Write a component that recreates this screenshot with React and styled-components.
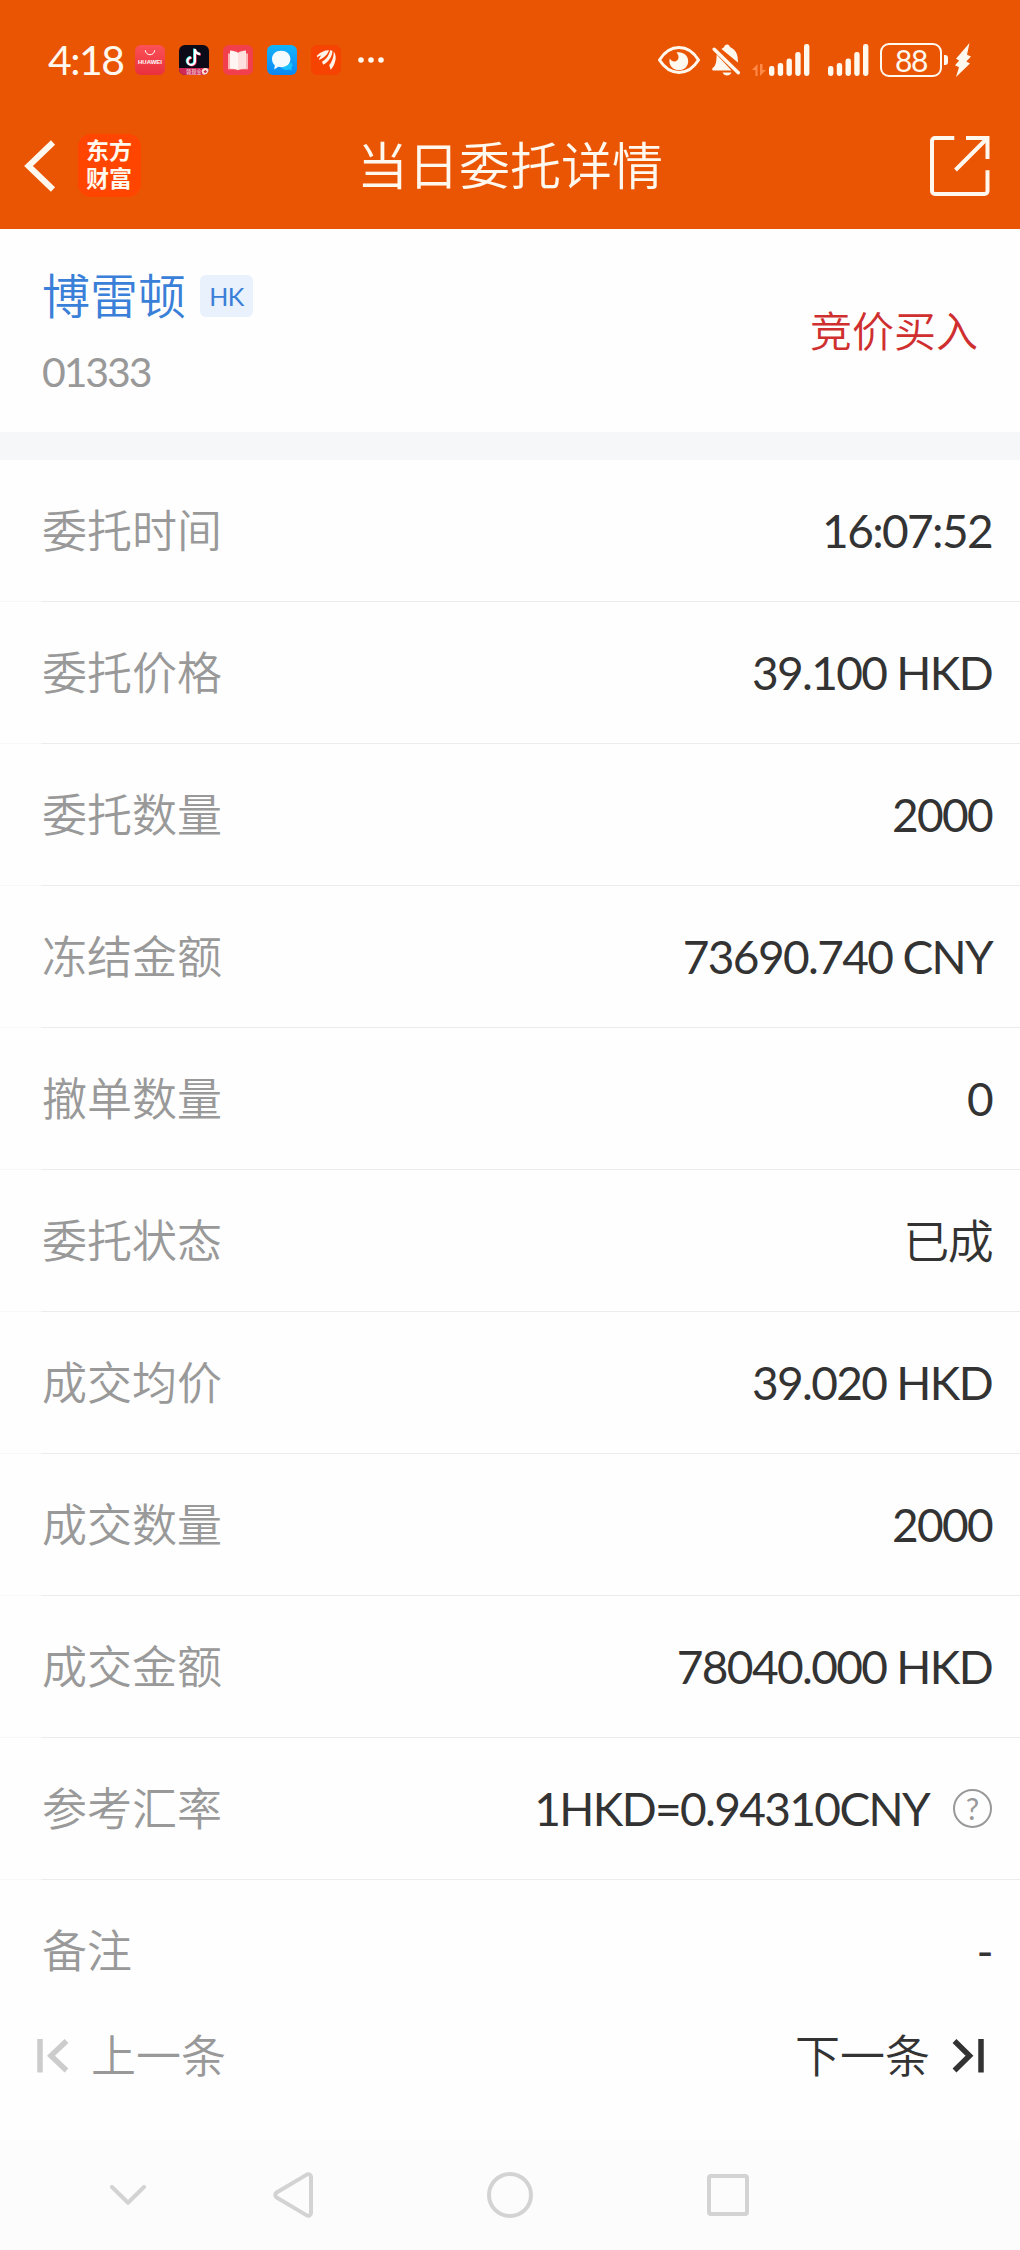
import React from 'react';
import styled, { createGlobalStyle } from 'styled-components';

const DETAILS = [
  { label: '委托时间', value: '16:07:52' },
  { label: '委托价格', value: '39.100 HKD' },
  { label: '委托数量', value: '2000' },
  { label: '冻结金额', value: '73690.740 CNY' },
  { label: '撤单数量', value: '0' },
  { label: '委托状态', value: '已成', isText: true },
  { label: '成交均价', value: '39.020 HKD' },
  { label: '成交数量', value: '2000' },
  { label: '成交金额', value: '78040.000 HKD' },
  { label: '参考汇率', value: '1HKD=0.94310CNY', help: true },
  { label: '备注', value: '-' },
];

const SIGNAL_BARS = [10, 13, 17.5, 24, 32];

const Signal = () => (
  <svg width="41" height="32" viewBox="0 0 41 32" fill="#fff8ee">
    {SIGNAL_BARS.map((h, i) => (
      <rect key={h} x={i * 8.75} y={32 - h} width="5.4" height={h} rx="2.4" />
    ))}
  </svg>
);

const StatusBar = () => (
  <StatusWrapper>
    <StatusLeft>
      <Time>4:18</Time>
      <AppIcons>
        <svg width="30" height="30" viewBox="0 0 30 30">
          <defs>
            <linearGradient id="market" x1="0" y1="0" x2="0" y2="1">
              <stop offset="0" stopColor="#fb5157" />
              <stop offset="1" stopColor="#e9303e" />
            </linearGradient>
          </defs>
          <rect width="30" height="30" rx="6" fill="url(#market)" />
          <path d="M10.3 5.2c.3 6 9 6 9.4 0" fill="none" stroke="#fff" strokeWidth="1" />
          <TinyText x="15" y="19.2" textAnchor="middle" textLength="24" lengthAdjust="spacingAndGlyphs">
            HUAWEI
          </TinyText>
        </svg>
        <svg width="30" height="30" viewBox="0 0 30 30">
          <defs>
            <clipPath id="tile">
              <rect width="30" height="30" rx="6" />
            </clipPath>
          </defs>
          <g clipPath="url(#tile)">
            <rect width="30" height="30" fill="#0d0b18" />
            <g fill="none" strokeWidth="2.2">
              <path d="M15.2 3.6v12.2a3.7 3.7 0 1 1-3.7-3.7M15.2 4c.5 3 2.5 4.300 5.300 4.600" stroke="#25e6e4" />
              <path d="M16.600 4.500v12.200a3.700 3.700 0 1 1-3.700-3.700M16.600 5c.5 3 2.500 4.300 5.300 4.600" stroke="#f5335f" />
              <path d="M15.900 4v12.200a3.700 3.700 0 1 1-3.700-3.700M15.900 4.500c.5 3 2.500 4.300 5.300 4.600" stroke="#fff" />
            </g>
            <path d="M0 23h30v7H0z" fill="#cf2a58" />
            <circle cx="26.300" cy="26.600" r="3.500" fill="#ffe0cf" />
            <path d="M24.800 26.600h3M26.300 25.100v3" stroke="#cf2a58" strokeWidth="1.100" />
            <SubText x="7" y="28.600">领现金</SubText>
          </g>
        </svg>
        <svg width="30" height="30" viewBox="0 0 30 30">
          <rect width="30" height="30" rx="6" fill="#f23f4d" />
          <path d="M5 8.5h20v15.8H5z" fill="#fbb3b4" />
          <path d="M7 5.5c3 .2 6 .8 8 2.2v17.6c-2-1.3-5-1.7-8-1.8z" fill="#fff5f2" />
          <path d="M23 5.5c-3 .2-6 .8-8 2.2v17.6c2-1.3 5-1.7 8-1.8z" fill="#ffe0de" />
        </svg>
        <svg width="30" height="30" viewBox="0 0 30 30">
          <defs>
            <linearGradient id="chat" x1="0" y1="0" x2="0" y2="1">
              <stop offset="0" stopColor="#12b4fb" />
              <stop offset="1" stopColor="#0a87f4" />
            </linearGradient>
          </defs>
          <rect width="30" height="30" rx="6" fill="url(#chat)" />
          <path d="M24.5 17.5c1.5 2.5.8 4.5-.2 5.5l.6 2.4-3-.8c-3 .8-6 .2-7.5-1.8z" fill="#17c2ff" />
          <path
            d="M14.2 5.8c5.3 0 9.2 3.4 9.2 8.2s-3.900 8.200-9.200 8.200c-1 0-2-.1-2.900-.4L7.200 24.500l.6-4.300C6 18.600 5 16.500 5 14c0-4.800 3.900-8.200 9.200-8.200z"
            fill="#f4fbff"
          />
        </svg>
        <svg width="30" height="30" viewBox="0 0 30 30">
          <rect width="30" height="30" rx="6" fill="#f64302" />
          <g fill="#fff3ea">
            <path d="M6 10.5C9.5 7 14 5 18 5.2c-1.2 4.3-5.2 7.8-10.2 9.8.4-1.9 1.3-3.3 2.5-4.5-1.6.2-3.2.9-4.3 2z" />
            <path d="M19.2 5.3l2.3.5c-.2 5.5-3.300 10.800-9.300 14l-1.200-3c4.500-2.900 7.400-6.900 8.200-11.500z" />
            <path d="M22.800 6.400c2.200 3 2.400 7 1.200 10.600-1 3-2.200 5.600-4.300 7.800l-1.500-4.500c2.800-3.800 4.600-8.400 4.600-13.900z" />
          </g>
        </svg>
      </AppIcons>
      <svg width="26" height="6" viewBox="0 0 26 6" fill="#fff8ee">
        <circle cx="3" cy="3" r="2.8" />
        <circle cx="13" cy="3" r="2.8" />
        <circle cx="23" cy="3" r="2.8" />
      </svg>
    </StatusLeft>
    <StatusRight>
      <EyeIcon width="42" height="28" viewBox="0 0 42 28">
        <path
          d="M1.5 14C6.5 6 13 1.6 21 1.6S35.5 6 40.5 14C35.5 22 29 26.4 21 26.4S6.5 22 1.5 14z"
          fill="none"
          stroke="#fff8ee"
          strokeWidth="3"
          strokeLinejoin="round"
        />
        <path
          d="M18.5 6.5c6-1.3 11.7 2.5 11.7 8.7 0 5-4 9-9.2 9-5.4 0-9.6-4-9.6-9.2 0-1 .2-1.8.5-2.6 1.2 2.4 3.6 3.7 6 2.8 3.2-1.2 3.6-5.6.6-8.7z"
          fill="#fff8ee"
        />
      </EyeIcon>
      <BellIcon width="28" height="32" viewBox="0 0 28 32">
        <g fill="#fff8ee">
          <path d="M9.500 5C10.800 4 12 3.500 12.300 2.500c.8-2.700 4.500-2.700 5.300-.2.300 1 1.300 1.200 2.500 2C24.300 7.100 26.100 11.100 25.900 18.500z" />
          <path d="M4.600 10.500 19.500 26.500H1.200c-1.600-.6-1.300-2 0-3 2.500-2.200 3.400-5 3.400-13z" />
          <path d="M10.500 28.500h9c-1.500 4-7.500 4-9 0z" />
        </g>
        <path d="M2.200 5.200 26.300 28.700" stroke="#fff8ee" strokeWidth="3.400" strokeLinecap="round" />
      </BellIcon>
      <DataIcon width="14" height="12" viewBox="0 0 14 12">
        <path d="M5.500 12V0L0 6h3.500v6zM8 0v12l6-6h-3.500V0z" fill="#ff8a4a" />
      </DataIcon>
      <Signal />
      <SecondSignal>
        <Signal />
      </SecondSignal>
      <Battery>88</Battery>
      <BatteryTip />
      <svg width="16" height="34" viewBox="0 0 16 34">
        <path d="M14.500 0 1 15.800l3.200 1.700L0 22.200l4 2L1 34 15 20.500l-3.700-2L16 13.500l-4-1.700z" fill="#fff8ee" />
      </svg>
    </StatusRight>
  </StatusWrapper>
);

const App = () => (
  <>
    <GlobalStyle />
    <Page>
      <Top>
        <StatusBar />
        <TitleBar>
          <TitleSide>
            <BackIcon width="32" height="52" viewBox="0 0 32 52">
              <path d="M29 2.500 4.500 26 29 49.500" fill="none" stroke="#fff8ee" strokeWidth="6" />
            </BackIcon>
            <Brand>东方财富</Brand>
          </TitleSide>
          <Title>当日委托详情</Title>
          <TitleSide $end>
            <svg width="60" height="60" viewBox="0 0 60 60" fill="none" stroke="#fff8ee" strokeWidth="4">
              <path d="M24.300 2H5a3 3 0 0 0-3 3v50a3 3 0 0 0 3 3h49.500a3 3 0 0 0 3-3V34.300" />
              <path d="M36 2h21.500v21M56.500 3 25.500 34" />
            </svg>
          </TitleSide>
        </TitleBar>
      </Top>

      <Stock>
        <StockInfo>
          <StockHead>
            <StockName>博雷顿</StockName>
            <Market>HK</Market>
          </StockHead>
          <StockCode>01333</StockCode>
        </StockInfo>
        <Side>竞价买入</Side>
      </Stock>

      <List>
        {DETAILS.map(({ label, value, isText, help }) => (
          <Row key={label}>
            <Label>{label}</Label>
            <Value $isText={isText}>{value}</Value>
            {help && <Help>?</Help>}
          </Row>
        ))}
      </List>

      <Pager>
        <PagerButton $disabled>
          <svg width="32" height="34" viewBox="0 0 32 34" fill="none" stroke="#ccc" strokeWidth="5.500">
            <path d="M3 0v33.500M29.500 2 14 16.800 29.500 31.500" />
          </svg>
          上一条
        </PagerButton>
        <PagerButton>
          下一条
          <svg width="32" height="34" viewBox="0 0 32 34" fill="none" stroke="#333" strokeWidth="5.500">
            <path d="M29 0v33.500M2.500 2 17.500 16.800 2.500 31.500" />
          </svg>
        </PagerButton>
      </Pager>

      <SystemNav>
        <svg width="36" height="20" viewBox="0 0 36 20">
          <path d="M2 2l16 15.700L34 2" />
        </svg>
        <svg width="40" height="46" viewBox="0 0 40 46">
          <path d="M33.800 2.600 3.600 20.500a3 3 0 0 0 0 5L33.800 43.400a2.800 2.800 0 0 0 4.200-2.400V5a2.800 2.800 0 0 0-4.200-2.400z" />
        </svg>
        <svg width="46" height="46" viewBox="0 0 46 46">
          <circle cx="23" cy="23" r="21" />
        </svg>
        <svg width="42" height="42" viewBox="0 0 42 42">
          <rect x="2" y="2" width="38" height="38" rx="2" />
        </svg>
      </SystemNav>
    </Page>
  </>
);

export default App;

const GlobalStyle = createGlobalStyle`
  * {
    box-sizing: border-box;
  }

  body {
    margin: 0;
    font-family: Lato, 'Noto Sans CJK SC', sans-serif;
    font-weight: 350;
  }

  svg {
    display: block;
    flex-shrink: 0;
  }
`;

const Page = styled.div`
  display: flex;
  flex-direction: column;
  width: 1020px;
  height: 2250px;
  background: #fefefe;
`;

const Top = styled.header`
  height: 229px;
  padding-top: 18px;
  background: #ea5504;
  color: #fff8ee;
`;

const StatusWrapper = styled.div`
  display: flex;
  justify-content: space-between;
  height: 84px;
  padding: 0 49px 0 48px;
`;

const StatusLeft = styled.div`
  display: flex;
  align-items: center;
`;

const Time = styled.span`
  width: 87px;
  font-size: 41px;
  font-weight: 400;
  line-height: 50px;
  letter-spacing: -1.5px;
`;

const AppIcons = styled.div`
  display: flex;
  gap: 14px;
  margin-right: 17px;
`;

const TinyText = styled.text`
  fill: #fff;
  font-family: 'Liberation Sans', sans-serif;
  font-size: 5.5px;
  font-weight: 700;
`;

const SubText = styled.text`
  fill: #fff;
  font-family: 'Noto Sans CJK SC', sans-serif;
  font-size: 5.2px;
`;

const StatusRight = styled.div`
  display: flex;
  align-items: center;
`;

const EyeIcon = styled.svg`
  margin-right: 12px;
`;

const BellIcon = styled.svg`
  margin-right: 12px;
`;

const DataIcon = styled.svg`
  margin: 19px 3px 0 0;
`;

const SecondSignal = styled.div`
  margin: 0 11px 0 18px;
`;

const Battery = styled.div`
  width: 62px;
  height: 34px;
  border: 2px solid #fff8ee;
  border-radius: 9px;
  font-size: 30px;
  font-weight: 400;
  line-height: 30px;
  letter-spacing: -1.5px;
  text-align: center;
`;

const BatteryTip = styled.div`
  width: 4px;
  height: 10px;
  margin: 0 7px 0 2px;
  border-radius: 0 3px 3px 0;
  background: #fff8ee;
`;

const TitleBar = styled.div`
  display: flex;
  align-items: center;
  justify-content: space-between;
  height: 127px;
  padding: 0 30px;
`;

const TitleSide = styled.div`
  display: flex;
  flex: 1;
  align-items: center;
  justify-content: ${({ $end }) => ($end ? 'flex-end' : 'flex-start')};
  gap: 22px;
`;

const BackIcon = styled.svg`
  margin-left: -6px;
`;

const Brand = styled.div`
  width: 63px;
  height: 63px;
  padding: 3px 8px;
  border-radius: 13px;
  background: #ff4500;
  font-size: 23px;
  font-weight: 700;
  line-height: 27.5px;
  word-break: break-all;
`;

const Title = styled.h1`
  margin: 0;
  font-size: 51px;
  font-weight: 350;
  line-height: 60px;
`;

const Stock = styled.section`
  display: flex;
  align-items: center;
  justify-content: space-between;
  height: 203px;
  padding: 0 42px;
`;

const StockInfo = styled.div`
  padding-top: 5px;
`;

const StockHead = styled.div`
  display: flex;
  align-items: center;
  gap: 14px;
`;

const StockName = styled.span`
  color: #3a7fd8;
  font-size: 48px;
  line-height: 60px;
`;

const Market = styled.span`
  width: 53px;
  height: 42px;
  border-radius: 6px;
  background: #e8f1fc;
  color: #3a7fd8;
  font-size: 25px;
  font-weight: 400;
  line-height: 43px;
  letter-spacing: -0.5px;
  text-align: center;
`;

const StockCode = styled.div`
  margin-top: 18px;
  color: #999;
  font-size: 41px;
  font-weight: 400;
  line-height: 56px;
  letter-spacing: -2.1px;
`;

const Side = styled.div`
  color: #cf2f2f;
  font-size: 42px;
  line-height: 60px;
`;

const List = styled.section`
  border-top: 28px solid #f6f7f9;
`;

const Row = styled.div`
  display: flex;
  align-items: center;
  height: 142px;
  padding: 0 28px 0 42px;
  border-bottom: 1px solid;
  border-image: linear-gradient(to right, #f8f8f8 42px, #ececec 42px) 1;
  font-size: 45px;
  line-height: 60px;

  &:last-child {
    align-items: flex-start;
    height: 116px;
    padding-top: 41px;
    border: 0;
  }
`;

const Label = styled.span`
  flex: 1;
  color: #999;
`;

const Value = styled.span`
  color: #333;
  font-size: 46px;
  font-weight: ${({ $isText }) => ($isText ? 350 : 400)};
  letter-spacing: -1.65px;
`;

const Help = styled.span`
  width: 39px;
  height: 39px;
  margin-left: 24px;
  border: 2px solid #999;
  border-radius: 50%;
  color: #999;
  font-size: 30px;
  font-weight: 400;
  line-height: 34px;
  text-align: center;
`;

const Pager = styled.div`
  display: flex;
  align-items: center;
  justify-content: space-between;
  height: 144px;
  padding: 0 36px 24px 37px;
`;

const PagerButton = styled.button`
  display: flex;
  align-items: center;
  gap: 22px;
  padding: 0;
  border: 0;
  background: none;
  color: ${({ $disabled }) => ($disabled ? '#999' : '#333')};
  font: inherit;
  font-size: 45px;
  line-height: 60px;
`;

const SystemNav = styled.nav`
  display: flex;
  flex: 1;
  align-items: center;
  padding-left: 110px;
  background: #fcfcfc;

  svg {
    fill: none;
    stroke: #d3d3d3;
    stroke-width: 4;
    stroke-linecap: round;
    stroke-linejoin: round;
  }

  svg:nth-child(2) {
    margin-left: 127px;
  }

  svg:nth-child(n + 3) {
    margin-left: 174px;
  }
`;
